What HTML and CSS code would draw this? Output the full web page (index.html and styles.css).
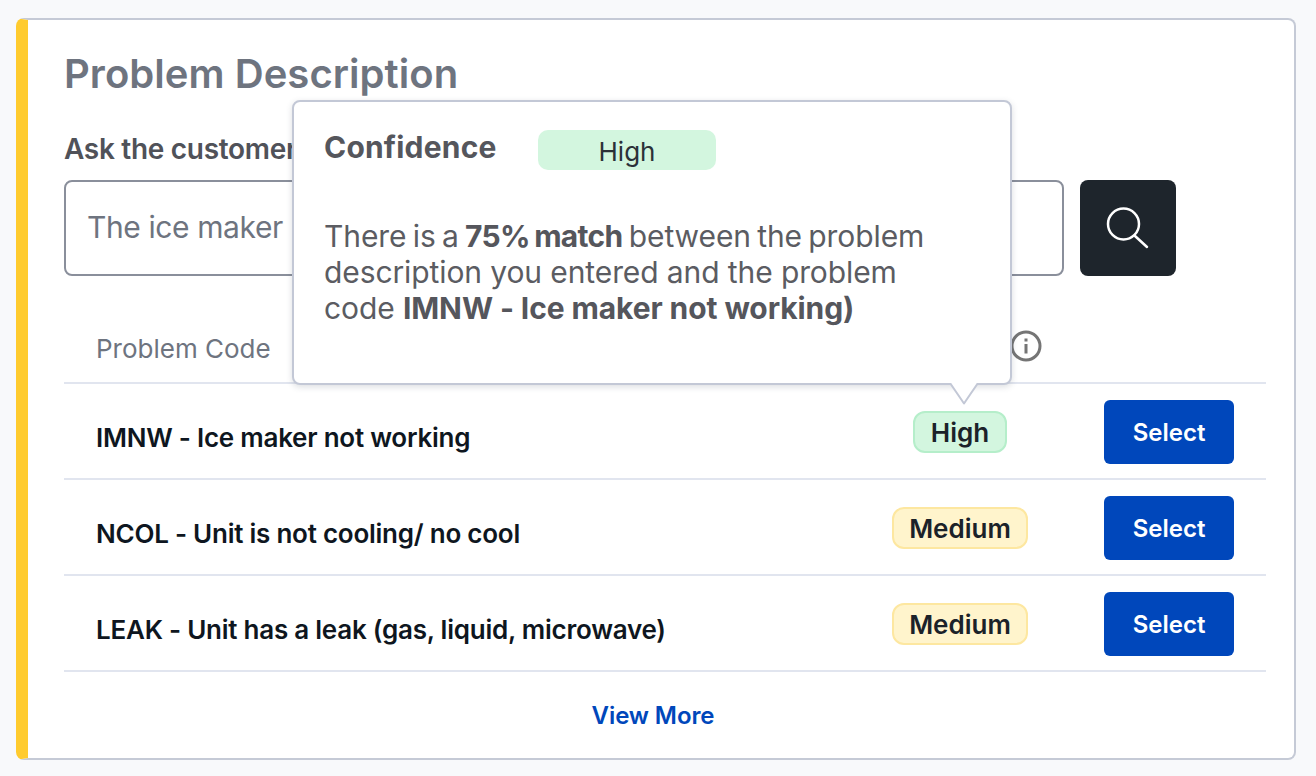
FILE: index.html
```html
<!DOCTYPE html>
<html lang="en">
<head>
<meta charset="utf-8">
<title>Problem Description</title>
<link rel="stylesheet" href="styles.css">
</head>
<body>
<section class="card">
  <h1 class="title">Problem Description</h1>
  <label class="ask">Ask the customer</label>
  <div class="search">
    <div class="input">The ice maker</div>
    <button class="search-btn" aria-label="Search">
      <svg width="44" height="44" viewBox="0 0 44 44" fill="none" stroke="#fff" stroke-width="2.5" stroke-linecap="round"><circle cx="17.5" cy="18" r="15.5"/><path d="M29 30L41 41"/></svg>
    </button>
  </div>
  <div class="table">
    <div class="row head">
      <span class="head-code">Problem Code</span>
      <span class="head-conf">
        <svg class="info" width="32" height="32" viewBox="0 0 32 32" fill="none"><circle cx="16" cy="16" r="14" stroke="#757575" stroke-width="3"/><rect x="14.5" y="14" width="3" height="9.5" fill="#757575"/><rect x="14.5" y="8.5" width="3" height="3" fill="#757575"/></svg>
      </span>
      <span></span>
    </div>
    <div class="row">
      <span class="code">IMNW - Ice maker not working</span>
      <span class="pill high">High</span>
      <button class="select">Select</button>
    </div>
    <div class="row">
      <span class="code">NCOL - Unit is not cooling/ no cool</span>
      <span class="pill medium">Medium</span>
      <button class="select">Select</button>
    </div>
    <div class="row">
      <span class="code">LEAK - Unit has a leak (gas, liquid, microwave)</span>
      <span class="pill medium">Medium</span>
      <button class="select">Select</button>
    </div>
  </div>
  <a class="more">View More</a>
  <aside class="tip">
    <div class="tip-head">
      <strong class="tip-title">Confidence</strong>
      <span class="tip-badge">High</span>
    </div>
    <p class="tip-text">
      <span class="line first">There is a <b class="tight">75% match</b> between the problem</span>
      <span class="line">description you entered and the problem</span>
      <span class="line">code <b>IMNW - Ice maker not working)</b></span>
    </p>
    <svg class="tip-arrow" width="30" height="22" viewBox="0 0 30 22"><path d="M1 0L15 20.5L29 0" fill="#fff" stroke="#c3c8d6" stroke-width="2" stroke-linejoin="round"/></svg>
  </aside>
</section>
</body>
</html>
```

FILE: styles.css
```css
* { box-sizing: border-box; }
html, body { margin: 0; height: 776px; overflow: hidden; }
body {
  background: #f8f9fb;
  padding: 18px 20px 0 16px;
  font-family: Inter, "Noto Sans", sans-serif;
}
.card {
  position: relative;
  height: 742px;
  background: #fff;
  border: 2px solid #c5cad6;
  border-left: 12px solid #ffcb2e;
  border-radius: 8px;
  padding: 30px 28px 0 36px;
}
.title {
  margin: 0;
  font-size: 40px;
  line-height: 48px;
  letter-spacing: 0.05px;
  font-weight: 600;
  color: #6e747f;
}
.ask {
  display: block;
  margin-top: 33px;
  font-size: 28px;
  line-height: 36px;
  letter-spacing: -0.3px;
  font-weight: 600;
  color: #505259;
  white-space: nowrap;
}
.search { display: flex; gap: 16px; margin-top: 13px; }
.input {
  width: 1000px;
  height: 96px;
  border: 2px solid #8a8f9b;
  border-radius: 8px;
  padding: 0 21px;
  font-size: 30px;
  line-height: 90px;
  letter-spacing: -0.4px;
  color: #6e747f;
}
.search-btn {
  display: flex;
  align-items: center;
  justify-content: center;
  width: 96px;
  height: 96px;
  border: 0;
  border-radius: 8px;
  background: #1e252c;
  padding: 0;
}
.table { margin-top: 26px; }
.row {
  display: grid;
  grid-template-columns: 1fr 200px 174px;
  align-items: center;
  height: 96px;
  padding: 0 32px;
  border-bottom: 2px solid #e1e5ef;
}
.row.head { height: 82px; padding-top: 12px; }
.head-code { font-size: 26px; color: #6e747f; }
.head-conf {
  display: flex;
  align-items: center;
  justify-content: flex-end;
  padding-right: 18px;
}
.info { margin-top: -4px; }
.code {
  font-size: 26px;
  font-weight: 600;
  letter-spacing: -0.24px;
  color: #0e1620;
  white-space: nowrap;
  padding-top: 12px;
}
.pill {
  justify-self: center;
  height: 42px;
  border-radius: 12px;
  padding: 0 16px;
  border: 2px solid;
  font-size: 26px;
  line-height: 40px;
  font-weight: 600;
  color: #1b2229;
  margin-top: 2px;
}
.high { background: #d3f6df; border-color: #b5eeca; }
.medium { background: #fff4cc; border-color: #fde7a0; padding: 0 15px; }
.select {
  justify-self: end;
  width: 130px;
  height: 64px;
  border: 0;
  border-radius: 6px;
  background: #0047bb;
  color: #fff;
  font: 600 24px Inter, "Noto Sans", sans-serif;
  margin-top: 2px;
}
.more {
  display: block;
  padding-right: 24px;
  margin-top: 28px;
  text-align: center;
  font-size: 24px;
  line-height: 32px;
  letter-spacing: -0.1px;
  font-weight: 600;
  color: #0047bb;
}
.tip {
  position: absolute;
  left: 264px;
  top: 80px;
  width: 720px;
  height: 285px;
  background: #fff;
  border: 2px solid #c3c8d6;
  border-radius: 8px;
  padding: 28px 30px;
  box-shadow: 0 2px 6px rgba(60, 70, 90, .18);
}
.tip-head { display: flex; align-items: flex-start; }
.tip-title {
  width: 214px;
  margin-top: -3px;
  font-size: 30px;
  line-height: 40px;
  letter-spacing: 0.2px;
  font-weight: 700;
  color: #55565c;
}
.tip-badge {
  width: 178px;
  height: 40px;
  border-radius: 10px;
  background: #d3f6df;
  text-align: center;
  font-size: 26px;
  line-height: 43px;
  color: #2b3138;
}
.tip-text {
  margin: 48px 0 0;
  font-size: 30px;
  line-height: 36px;
  letter-spacing: -0.1px;
  color: #5b5c62;
}
.line { display: block; white-space: nowrap; }
.first { word-spacing: -2px; }
.tip-text b { font-weight: 700; color: #55565c; }
.tip-text .tight { letter-spacing: -0.7px; }
.tip-arrow { position: absolute; left: 655px; bottom: -22px; display: block; }
```
